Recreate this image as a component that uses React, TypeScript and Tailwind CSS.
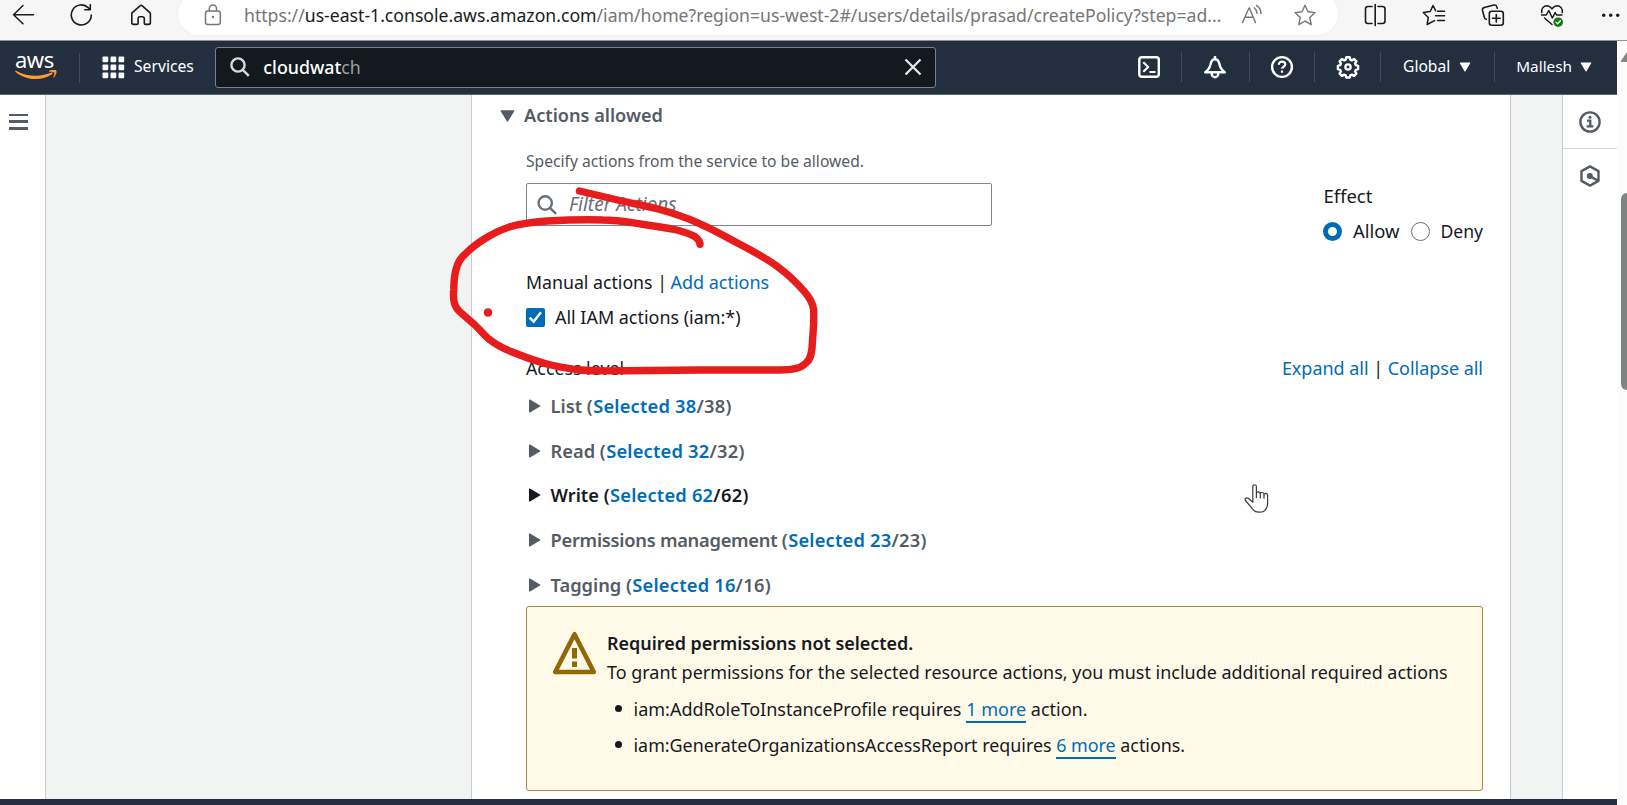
import React from "react";

const levels = [
  { name: "List", count: 38 },
  { name: "Read", count: 32 },
  { name: "Write", count: 62, active: true },
  { name: "Permissions management", count: 23, tight: true },
  { name: "Tagging", count: 16 },
];

function BrowserBar() {
  return (
    <div className="flex h-[41px] shrink-0 items-start overflow-hidden border-b border-[#8b929b] bg-[#f6f6f6] text-[#1b1b1b]">
      <div className="flex w-[178px] shrink-0 gap-[35px] pt-[3px] pl-[12px]">
        <svg className="h-6 w-6" viewBox="0 0 24 24" fill="none" stroke="currentColor" strokeWidth="1.5" strokeLinecap="round" strokeLinejoin="round">
          <path d="M21.500 11.700H1.500M11 2.500 1.500 11.700 11 20.800" />
        </svg>
        <svg className="-ml-px mr-px h-6 w-6" viewBox="0 0 24 24" fill="none" stroke="currentColor" strokeWidth="1.6" strokeLinecap="round" strokeLinejoin="round">
          <path d="M21.300 12A10 10 0 1 1 18.200 4.700L20 6.600M20.300 1.800V6.800H14.800" />
        </svg>
        <svg className="h-6 w-6" viewBox="0 0 24 24" fill="none" stroke="currentColor" strokeWidth="1.6" strokeLinejoin="round">
          <path d="M1.800 10.200 10 2.800a1.700 1.700 0 0 1 2.300 0l8.100 7.400v9.400a1.800 1.800 0 0 1-1.800 1.800h-3.100a1.200 1.200 0 0 1-1.200-1.200v-4.400a2 2 0 0 0-2-2h-2.200a2 2 0 0 0-2 2v4.400a1.200 1.200 0 0 1-1.200 1.200H3.600a1.800 1.800 0 0 1-1.800-1.800z" />
        </svg>
      </div>
      <div className="-mt-[7px] flex h-[42px] w-[1160px] shrink-0 items-start rounded-full bg-white pt-[7px] text-[#767676] shadow-[0_0_3px_rgba(0,0,0,0.06)]">
        <svg className="mt-[3px] ml-[25px] h-6 w-5 shrink-0" viewBox="0 0 20 24" fill="none" stroke="currentColor" strokeWidth="1.5">
          <rect x="2.5" y="8" width="14.8" height="13.5" rx="2.3" />
          <path d="M6.300 8V5.600a3.600 3.600 0 0 1 7.200 0V8" />
          <circle cx="9.900" cy="14" r="1.200" fill="currentColor" stroke="none" />
        </svg>
        <span className="ml-[21px] shrink-0 text-[17.64px] leading-[30px] whitespace-nowrap">
          https://<span className="text-[#1b1b1b]">us-east-1.console.aws.amazon.com</span>/iam/home?region=us-west-2#/users/details/prasad/createPolicy?step=ad...
        </span>
        <svg className="mt-[3px] ml-[20px] h-6 w-6 shrink-0" viewBox="0 0 24 24" fill="none" stroke="currentColor" strokeWidth="1.4" strokeLinecap="round" strokeLinejoin="round">
          <path d="M1.500 19.500 8 5h.4L14.500 19.500M4 14.300h8.300M13.200 4.800a7 7 0 0 1 2.800 5.400M15.500 2.300a10.500 10.500 0 0 1 4.600 8.300" />
        </svg>
        <svg className="mt-[3px] ml-[27.5px] h-6 w-6 shrink-0" viewBox="0 0 24 24" fill="none" stroke="currentColor" strokeWidth="1.4" strokeLinejoin="round">
          <path d="m12 2.200 3 6.500 7 .9-5.200 4.900 1.400 7.200-6.200-3.500-6.200 3.500 1.400-7.200L2 9.600l7-.9z" />
        </svg>
      </div>
      <div className="flex flex-1 gap-[35px] pt-[3px] pl-[25px]">
        <svg className="h-6 w-6 shrink-0" viewBox="0 0 24 24" fill="none" stroke="currentColor" strokeWidth="1.6" strokeLinecap="round">
          <path d="M9 3.500H5A2.500 2.500 0 0 0 2.500 6v12A2.500 2.500 0 0 0 5 20.500h4M15 3.500h4.500A2.500 2.500 0 0 1 22 6v12a2.500 2.500 0 0 1-2.500 2.500H15M12.200 1.500v21" />
        </svg>
        <svg className="h-6 w-6 shrink-0" viewBox="0 0 24 24" fill="none" stroke="currentColor" strokeWidth="1.5" strokeLinecap="round" strokeLinejoin="round">
          <path d="M13.600 7.600 11 2.500 8.200 8.500 1.300 9.500l5 5-1.200 7 6-3.200 1.500-.7M15.500 8.200h7M13.500 12.800h9M15.500 17.500h7" />
        </svg>
        <svg className="h-6 w-6 shrink-0" viewBox="0 0 24 24" fill="none" stroke="currentColor" strokeWidth="1.6" strokeLinecap="round" strokeLinejoin="round">
          <rect x="8.3" y="8.3" width="14" height="14" rx="2.5" />
          <path d="M15.300 11.500v7.600M11.500 15.300h7.600M5.300 16.300a2.500 2.500 0 0 1-2-2L1.500 7.500A2.500 2.500 0 0 1 3.300 4.600l9.600-2.500a2.500 2.500 0 0 1 3 1.800l.4 1.300" />
        </svg>
        <svg className="h-6 w-6 shrink-0" viewBox="0 0 24 24" fill="none" stroke="currentColor" strokeWidth="1.5" strokeLinecap="round" strokeLinejoin="round">
          <path d="M1.800 9.500C1 5.500 3.800 2.700 6.700 2.700c2.300 0 4 1.300 5.300 3.200 1.300-1.900 3-3.200 5.300-3.200 2.900 0 5.700 2.800 4.900 6.800M1.500 12h4.800l2.500-4.500 3.500 7.500 2.900-5.500 1.300 2.500h5.500M4.500 15l7.500 6.500" />
          <circle cx="18.200" cy="19.200" r="4.800" fill="#107c10" stroke="none" />
          <path d="m16 19.300 1.600 1.500 2.800-3" stroke="#fff" strokeWidth="1.3" />
        </svg>
        <svg className="h-6 w-6 shrink-0" viewBox="0 0 24 24" fill="currentColor">
          <circle cx="4.700" cy="12.300" r="1.700" />
          <circle cx="11.700" cy="12.300" r="1.700" />
          <circle cx="18.700" cy="12.300" r="1.700" />
        </svg>
      </div>
    </div>
  );
}

function Caret() {
  return (
    <svg className="h-[10px] w-[12px] shrink-0" viewBox="0 0 12 10" fill="currentColor">
      <path d="M1.200.5h9.600c.4 0 .6.4.4.8L6.500 9.200c-.2.4-.8.4-1 0L.8 1.300C.6.900.8.500 1.200.500z" />
    </svg>
  );
}

function NavIcon({ children }: { children: React.ReactNode }) {
  return (
    <svg className="h-6 w-6 shrink-0" viewBox="0 0 24 24" fill="none" stroke="currentColor" strokeWidth="2.4" strokeLinejoin="round">
      {children}
    </svg>
  );
}

function Divider() {
  return <div className="h-[30px] w-px shrink-0 bg-[#414d5c]" />;
}

function AwsNav() {
  return (
    <div className="flex h-[54px] shrink-0 items-center border-b border-[#5a6472] bg-[#232f3e] text-white">
      <div className="flex w-[79px] shrink-0 flex-col pb-[3px] pl-[15px]">
        <span className="h-[18px] text-[22px] leading-[14px] tracking-[-0.5px]">aws</span>
        <svg className="h-[10px] w-[43px]" viewBox="0 0 43 10" fill="#ff9d2b">
          <path d="M.2 1.100C.4.600 1 .600 1.500.900 13 7 26 7 36.500 2.600c1-.4 1.700.6.800 1.300C27 11.500 10.500 10.500.6 1.900.2 1.600.1 1.400.2 1.100z" />
          <path d="M34.300.7C36.500-.4 40.500-.5 41.300.4c.8 1.100-.3 5.200-2.300 7-.5.4-.9.2-.7-.3.6-1.400 1.500-3.800 1-4.500-.5-.7-3.200-.9-4.800-.9-.6 0-.7-.7-.2-1z" />
        </svg>
      </div>
      <Divider />
      <svg className="ml-[22px] h-[23px] w-[23px] shrink-0" viewBox="0 0 23 23" fill="currentColor">
        {[0.5, 8.5, 16.5].map((y) =>
          [0.5, 8.5, 16.5].map((x) => <rect key={`${x}-${y}`} x={x} y={y} width="5.7" height="5.7" rx="1" />)
        )}
      </svg>
      <span className="ml-[9px] pb-[2px] text-[15.7px]">Services</span>
      <div className="ml-[21.5px] flex h-[41px] w-[721px] shrink-0 items-center rounded-[3px] border border-[#79828b] bg-[#14191f] pr-[13px] pb-px pl-[14px]">
        <svg className="h-5 w-5 shrink-0 text-[#d5dbdb]" viewBox="0 0 20 20" fill="none" stroke="currentColor" strokeWidth="2.4">
          <circle cx="8" cy="8" r="6.600" />
          <path d="m12.800 12.800 6 6" />
        </svg>
        <span className="ml-[13px] pb-px text-[17.8px] leading-6">
          <span className="font-medium">cloudwat</span>
          <span className="text-[#9aa0a5]">ch</span>
        </span>
        <svg className="ml-auto h-[18px] w-[18px] text-[#e4e7e8]" viewBox="0 0 18 18" fill="none" stroke="currentColor" strokeWidth="2.3">
          <path d="M1.500 1.500 16.500 16.500M16.500 1.500 1.500 16.500" />
        </svg>
      </div>
      <div className="ml-auto flex items-center pb-px">
        <NavIcon>
          <rect x="2.3" y="2.3" width="19.5" height="19.5" rx="2.5" />
          <path d="m6.300 7.300 4.900 4.700-4.900 4.700M12.500 17h6" strokeWidth="2.2" />
        </NavIcon>
        <div className="ml-[20px]"><Divider /></div>
        <div className="ml-[21px]">
          <NavIcon>
            <path d="M2.200 17.300c3.900-2.500 4.600-4.300 5.400-8.200C8.200 6 10 4.300 12 4.300s3.800 1.700 4.400 4.800c.8 3.900 1.500 5.700 5.400 8.200z" />
            <path d="M12 1v3M8.800 18v1a3.200 3.200 0 0 0 6.400 0v-1" />
          </NavIcon>
        </div>
        <div className="ml-[22px]"><Divider /></div>
        <div className="ml-[20px]">
          <NavIcon>
            <circle cx="12" cy="12" r="9.900" />
            <path d="M8.800 9.700c0-1.900 1.400-3 3.200-3s3.300 1.100 3.300 2.800c0 2.200-3.300 2.300-3.300 4.300M12 15.600v2.200" strokeWidth="2.2" />
          </NavIcon>
        </div>
        <div className="ml-[20px]"><Divider /></div>
        <div className="ml-[21px]">
          <NavIcon>
            <path d="M10.300 2.300h3.400l.6 2.400 1.600.7 2.200-1.300 2.300 2.300-1.300 2.200.7 1.600 2.300.6v3.400l-2.300.6-.7 1.600 1.300 2.200-2.300 2.300-2.200-1.300-1.600.7-.6 2.200h-3.400l-.6-2.200-1.600-.7-2.200 1.300-2.300-2.300 1.300-2.200-.7-1.600-2.300-.6v-3.400l2.300-.6.7-1.600-1.300-2.200 2.300-2.300 2.200 1.300 1.600-.7z" />
            <circle cx="12" cy="12" r="2.600" />
          </NavIcon>
        </div>
        <div className="ml-[20px]"><Divider /></div>
        <span className="ml-[22px] mr-[8.5px] pb-px text-[15.6px]">Global</span>
        <Caret />
        <div className="ml-[23px]"><Divider /></div>
        <span className="ml-[21.5px] mr-[8px] pb-px text-[15.3px]">Mallesh</span>
        <Caret />
      </div>
      <div className="w-[25px] shrink-0" />
    </div>
  );
}

function Warning() {
  return (
    <div className="-mt-px flex h-[185px] rounded-[3px] border border-[#a88a3c] bg-[#fffae8] pt-[24px] pl-[25px] text-[#16191f]">
      <svg className="h-[45px] w-[45px] shrink-0" viewBox="0 0 45 45" fill="none" stroke="#906806">
        <path d="M22.500 3.200 3.200 41h38.600z" strokeWidth="4.6" strokeLinejoin="round" />
        <path d="M22.500 17v10.500M22.500 30.500v5.500" strokeWidth="5" />
      </svg>
      <div className="ml-[10px] text-[17.97px] leading-6 whitespace-nowrap">
        <div className="text-[17.93px] font-semibold">Required permissions not selected.</div>
        <div className="mt-[5px]">
          To grant permissions for the selected resource actions, you must include additional required actions
        </div>
        <ul className="mt-[13px] flex flex-col gap-[12px]">
          <li className="flex items-center text-[18px]">
            <span className="mr-[11.5px] ml-[8px] h-[7px] w-[7px] rounded-full bg-[#16191f]" />
            <span>
              iam:AddRoleToInstanceProfile requires{" "}
              <a className="border-b-2 border-[#006cb8] text-[#006cb8]">1 more</a> action.
            </span>
          </li>
          <li className="flex items-center text-[17.86px]">
            <span className="mr-[11.5px] ml-[8px] h-[7px] w-[7px] rounded-full bg-[#16191f]" />
            <span>
              iam:GenerateOrganizationsAccessReport requires{" "}
              <a className="border-b-2 border-[#006cb8] text-[#006cb8]">6 more</a> actions.
            </span>
          </li>
        </ul>
      </div>
    </div>
  );
}

function Panel() {
  return (
    <main className="w-[1040px] shrink-0 border-x border-[#c9cccf] bg-white pt-[8px] text-[17.8px] leading-6 text-[#16191f]">
      <div className="flex items-center pl-[27.5px] text-[#545b64]">
        <svg className="mt-[2px] h-[12px] w-[15px]" viewBox="0 0 15 12" fill="currentColor">
          <path d="M1.200.3h12.600c.5 0 .7.5.5.9L8.100 11.300c-.3.5-.9.5-1.200 0L.7 1.200C.5.800.7.300 1.200.300z" />
        </svg>
        <span className="ml-[9.5px] text-[18.15px] font-semibold">Actions allowed</span>
      </div>
      <div className="pt-[22px] pr-[27px] pl-[54px]">
        <div className="flex justify-between">
          <div>
            <div className="text-[15.63px] text-[#545b64]">Specify actions from the service to be allowed.</div>
            <div className="mt-[10px] flex h-[43px] w-[466px] items-center rounded-[2px] border border-[#7f868e] pl-[10px] text-[#687078]">
              <svg className="h-5 w-5 shrink-0" viewBox="0 0 20 20" fill="none" stroke="currentColor" strokeWidth="2.4">
                <circle cx="8.200" cy="8" r="6.700" />
                <path d="m13 12.800 6 6" />
              </svg>
              <span className="ml-[12px] pb-[2px] text-[19px] italic">Filter Actions</span>
            </div>
          </div>
          <div className="flex h-[77px] flex-col gap-[11px] pt-[35px]">
            <div className="text-[18.5px]">Effect</div>
            <div className="flex items-center">
              <span className="h-[19px] w-[19px] rounded-full border-[5.5px] border-[#006cb8] bg-white" />
              <span className="ml-[10.5px] text-[18.4px]">Allow</span>
              <span className="ml-[11.5px] h-[19px] w-[19px] rounded-full border-[1.5px] border-[#687078]" />
              <span className="ml-[10.5px] text-[17.6px]">Deny</span>
            </div>
          </div>
        </div>
        <div className="mt-[44px]">
          <span className="text-[17.75px] tracking-[-0.02px]">Manual actions |</span>
          <a className="ml-[3.5px] text-[18px] text-[#006cb8]">Add actions</a>
        </div>
        <div className="mt-[11px] flex items-center">
          <span className="flex h-[19px] w-[19px] items-center justify-center rounded-[2px] bg-[#006cb8]">
            <svg className="h-[15px] w-[15px]" viewBox="0 0 15 15" fill="none" stroke="#fff" strokeWidth="2.4">
              <path d="m1.700 7.700 3.900 4L13 2.200" />
            </svg>
          </span>
          <span className="ml-[10px] text-[17.93px]">All IAM actions (iam:*)</span>
        </div>
        <div className="mt-[27px] flex justify-between">
          <span>Access level</span>
          <span className="text-[17.95px]">
            <a className="text-[#006cb8]">Expand all</a> | <a className="text-[#006cb8]">Collapse all</a>
          </span>
        </div>
        <div className="mt-[4px]">
          {levels.map((l) => (
            <div
              key={l.name}
              className={
                l.active
                  ? "flex h-[44.6px] items-center font-semibold text-[#16191f]"
                  : "flex h-[44.6px] items-center font-semibold text-[#545b64]"
              }
            >
              <svg className="ml-[2.5px] h-[14px] w-[12px]" viewBox="0 0 12 14" fill="currentColor">
                <path d="M0 1.200C0 .6.500.300 1 .600L11 6.500c.5.3.5.8 0 1.100L1 13.400c-.5.3-1 0-1-.6z" />
              </svg>
              <span className="ml-[10px] text-[18.3px]">
                <span className={l.tight ? "tracking-[-0.26px]" : ""}>{l.name} </span>
                <span className="tracking-[0.33px]">
                  (<a className="tracking-[0.2px] text-[#006cb8]">Selected {l.count}</a>/{l.count})
                </span>
              </span>
            </div>
          ))}
        </div>
        <Warning />
      </div>
    </main>
  );
}

function Annotation() {
  return (
    <svg className="pointer-events-none absolute inset-0 h-full w-full" viewBox="0 0 1627 805" fill="none">
      <path
        d="M579.500 191 617.600 200C633 203.500 645 205.500 658 209S685 217 699 223.300 723 235 736 242.300C751 250 764 257 776.700 266 789 275 797 283 804.400 291.700 810 298 813 304 813.700 310V323L812 348.300C811 356 810 360 806 363 802 367 799 368 795 368.700 790 370 786 370 780 370H699L625 370.700C608 371 592 371 580.600 370 570 369 560 367 551 365 537 362 525 357 514 352.700 503 348.500 495 344 488 338.300 483 334 479 329 475 325L460 312C456 308 455 306 454.400 303 453 298 453.400 294 453.700 290 454 283 454 278 455.500 271.700 457 264 460 258 466 253.300 472 247 479 242 488 236.700 496 232 503 229 510 226.700 521 223.500 534 222 547 221 566 220 585 219.500 602.800 220 612 220 622 221 632 222.700L660 227C667 228 672 229 676.800 230 684 232 690 233.500 695 236.700 698 239 700 241 700 244.300"
        stroke="#e71d1d"
        strokeWidth="7.4"
        strokeLinecap="round"
        strokeLinejoin="round"
      />
      <circle cx="488" cy="312.500" r="4.300" fill="#e71d1d" />
      <g transform="translate(1244 484)" stroke="#3a3d42" strokeWidth="1.2" fill="#fff" strokeLinejoin="round">
        <path d="M8.800 18.200V2.600c0-2.500 3.600-2.500 3.600 0v7.200c0-2.600 3.900-2.400 3.900.3 0-2.300 3.700-2.100 3.700.6 0-1.900 3.600-1.700 3.600.7v8.300c0 3-1.500 5.700-3.700 7.500-1 .8-2.700 1-5 1-2.700 0-4.200-.5-5.600-2.300L1.500 16.500c-1.300-1.800.9-3.300 2.900-2.200z" />
        <path d="M12.400 9.500v4.500M16.300 10v4.500M20 10.800v4" fill="none" />
      </g>
    </svg>
  );
}

export default function App() {
  return (
    <div className="relative flex h-[805px] w-[1627px] flex-col overflow-hidden bg-white font-['Noto_Sans',sans-serif]">
      <BrowserBar />
      <div className="flex min-h-0 flex-1">
        <div className="flex w-[1617px] shrink-0 flex-col">
          <AwsNav />
          <div className="flex min-h-0 flex-1 overflow-hidden">
            <aside className="w-[46px] shrink-0 border-r border-[#c9cccf] bg-white pt-[18.5px] pl-[8.5px]">
              <div className="flex w-[19px] flex-col gap-[4px]">
                <div className="h-[2.7px] bg-[#545b64]" />
                <div className="h-[2.7px] bg-[#545b64]" />
                <div className="h-[2.7px] bg-[#545b64]" />
              </div>
            </aside>
            <div className="w-[425px] shrink-0 bg-[#f2f3f3]" />
            <Panel />
            <div className="flex-1 bg-[#f2f3f3]" />
            <aside className="w-[55px] shrink-0 border-l border-[#c9cccf] bg-white text-[#545b64]">
              <div className="flex h-[54px] items-center justify-center border-b border-[#d5dbdb]">
                <svg className="h-6 w-6" viewBox="0 0 24 24" fill="none" stroke="currentColor" strokeWidth="2.4">
                  <circle cx="12" cy="12" r="9.600" />
                  <path d="M9 10.600h3.300v5.500M8.600 16.400h6.800" strokeWidth="2.3" />
                  <circle cx="12" cy="7.300" r="1.500" fill="currentColor" stroke="none" />
                </svg>
              </div>
              <div className="flex h-[54px] items-center justify-center">
                <svg className="h-6 w-6" viewBox="0 0 24 24" fill="none" stroke="currentColor" strokeWidth="2.4" strokeLinejoin="round">
                  <path d="M12 2.400 20.500 7.100v9.800L12 21.600 3.500 16.900V7.100z" />
                  <circle cx="11.800" cy="12" r="3" fill="currentColor" stroke="none" />
                  <path d="m12 12.300 8 4.300" />
                </svg>
              </div>
            </aside>
          </div>
          <div className="h-[6px] shrink-0 bg-[#232f3e]" />
        </div>
        <div className="flex flex-1 flex-col overflow-hidden bg-[#fcfcfc] pt-[11px] pl-[4px]">
          <svg className="h-[10px] w-[14px] shrink-0" viewBox="0 0 14 10" fill="#858585">
            <path d="M5.500.8c.5-.8 1.500-.8 2 0l5.800 7.700c.4.7 0 1.500-.8 1.500H.8C0 10-.3 9.200.2 8.500z" />
          </svg>
          <div className="mt-[131px] h-[197px] w-[12px] shrink-0 rounded-[6px] bg-[#7f8382]" />
        </div>
      </div>
      <Annotation />
    </div>
  );
}
